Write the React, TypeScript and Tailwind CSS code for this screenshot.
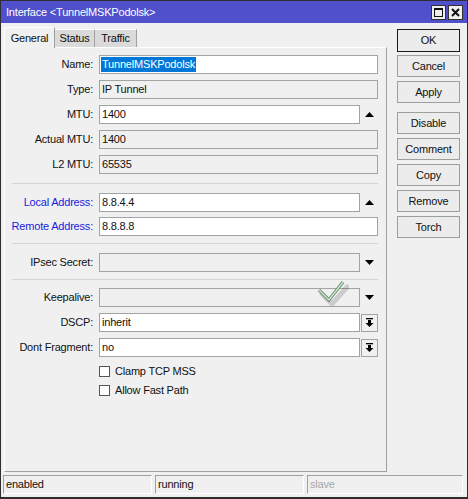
import React from "react";

const font = "font-['Liberation_Sans',Arial,sans-serif] tracking-[-0.2px]";

function Field({
  value,
  editable,
  selected,
  wide = true,
}: {
  value?: string;
  editable?: boolean;
  selected?: boolean;
  wide?: boolean;
}) {
  return (
    <div
      className={`h-[19px] border border-[#a3a3a3] flex items-center px-[1px] text-[11px] text-[#111] ${
        editable ? "bg-white" : "bg-[#f0f0f0]"
      } ${wide ? "w-[279px]" : "w-[261px]"}`}
    >
      {selected ? (
        <span className="bg-[#0078d7] text-white h-[15px] leading-[15px] px-[1px]">{value}</span>
      ) : (
        <span className="pl-[1px]">{value}</span>
      )}
    </div>
  );
}

function Row({
  label,
  blue,
  children,
  className = "",
}: {
  label: string;
  blue?: boolean;
  children: React.ReactNode;
  className?: string;
}) {
  return (
    <div className={`flex items-center h-[19px] ${className}`}>
      <div className={`w-[88px] text-right text-[11px] ${blue ? "text-[#1a1ae0]" : "text-[#111]"}`}>
        {label}:
      </div>
      <div className="ml-[6px] flex items-center">{children}</div>
    </div>
  );
}

function Tri({ up }: { up?: boolean }) {
  return (
    <div className="w-[18px] flex justify-center">
      <svg width="9" height="5" viewBox="0 0 9 5">
        {up ? <path d="M4.5 0 L9 5 L0 5 Z" fill="#000" /> : <path d="M0 0 L9 0 L4.5 5 Z" fill="#000" />}
      </svg>
    </div>
  );
}

function DropBtn() {
  return (
    <div className="ml-[1px] w-[17px] h-[18px] border border-[#a3a3a3] bg-[#f0f0f0] flex items-center justify-center">
      <svg width="9" height="9" viewBox="0 0 9 9">
        <rect x="1" y="0" width="7" height="1.3" fill="#000" />
        <path d="M3 2 H6 V5 H8.5 L4.5 9 L0.5 5 H3 Z" fill="#000" />
      </svg>
    </div>
  );
}

function Sep({ className = "" }: { className?: string }) {
  return <div className={`ml-[7px] w-[366px] h-[1px] bg-[#d5d5d5] ${className}`} />;
}

function Check({ label, className = "" }: { label: string; className?: string }) {
  return (
    <div className={`flex items-center h-[13px] pl-[94px] ${className}`}>
      <div className="w-[11px] h-[11px] border border-[#555] bg-white" />
      <span className="ml-[5px] text-[11px] text-[#111]">{label}</span>
    </div>
  );
}

function Btn({ label, primary, className = "" }: { label: string; primary?: boolean; className?: string }) {
  return (
    <div
      className={`w-[63px] flex items-center justify-center text-[11px] text-[#111] bg-[#ececec] ${
        primary ? "h-[23px] border border-[#1a1a1a]" : "h-[22px] border border-[#9e9e9e]"
      } ${className}`}
    >
      {label}
    </div>
  );
}

export default function App() {
  return (
    <div className={`${font} w-[468px] h-[499px] bg-[#f0f0f0] border border-b-2 border-[#2e2e2e] flex flex-col`}>
      {/* title */}
      <div className="h-[22px] bg-[#5050cc] flex items-center pl-[5px] pr-[4px]">
        <span className="text-white text-[11px]">Interface &lt;TunnelMSKPodolsk&gt;</span>
        <div className="ml-auto flex gap-[2px]">
          <div className="w-[15px] h-[15px] bg-[#efefef] border border-[#333] flex items-center justify-center">
            <div className="w-[9px] h-[9px] border border-[#111] border-t-2" />
          </div>
          <div className="w-[15px] h-[15px] bg-[#efefef] border border-[#333] flex items-center justify-center">
            <svg width="9" height="9" viewBox="0 0 9 9">
              <path d="M1 1 L8 8 M8 1 L1 8" stroke="#111" strokeWidth="2" />
            </svg>
          </div>
        </div>
      </div>

      {/* main */}
      <div className="h-[450px] flex pl-[3px]">
        <div className="flex flex-col pt-[4px]">
          <div className="flex items-end h-[20px]">
            <div className="relative z-10 h-[21px] mb-[-1px] w-[51px] bg-[#f0f0f0] border-t border-l border-r border-t-white border-l-white border-r-[#a0a0a0] flex items-center justify-center text-[11px] text-[#111]">
              General
            </div>
            <div className="h-[18px] w-[40px] bg-[#dadada] border-t border-r border-t-white border-r-[#a0a0a0] flex items-center justify-center text-[11px] text-[#111]">
              Status
            </div>
            <div className="h-[18px] w-[42px] bg-[#dadada] border-t border-r border-t-white border-r-[#a0a0a0] flex items-center justify-center text-[11px] text-[#111]">
              Traffic
            </div>
          </div>
          <div className="relative w-[383px] h-[425px] border border-t-white border-l-white border-r-[#a0a0a0] border-b-[#a0a0a0] pt-[7px]">
            <div className="flex flex-col gap-[6px]">
              <Row label="Name">
                <Field value="TunnelMSKPodolsk" editable selected />
              </Row>
              <Row label="Type">
                <Field value="IP Tunnel" />
              </Row>
              <Row label="MTU">
                <Field value="1400" editable wide={false} />
                <Tri up />
              </Row>
              <Row label="Actual MTU">
                <Field value="1400" />
              </Row>
              <Row label="L2 MTU">
                <Field value="65535" />
              </Row>
            </div>
            <Sep className="mt-[9px]" />
            <div className="flex flex-col gap-[5px] mt-[9px]">
              <Row label="Local Address" blue>
                <Field value="8.8.4.4" editable wide={false} />
                <Tri up />
              </Row>
              <Row label="Remote Address" blue>
                <Field value="8.8.8.8" editable />
              </Row>
            </div>
            <Sep className="mt-[7px]" />
            <Row label="IPsec Secret" className="mt-[9px]">
              <Field wide={false} />
              <Tri />
            </Row>
            <Sep className="mt-[7px]" />
            <div className="flex flex-col gap-[6px] mt-[8px]">
              <Row label="Keepalive">
                <Field wide={false} />
                <Tri />
              </Row>
              <Row label="DSCP">
                <Field value="inherit" editable wide={false} />
                <DropBtn />
              </Row>
              <Row label="Dont Fragment">
                <Field value="no" editable wide={false} />
                <DropBtn />
              </Row>
            </div>
            <Check label="Clamp TCP MSS" className="mt-[8px]" />
            <Check label="Allow Fast Path" className="mt-[6px]" />

            {/* cursor checkmark overlay */}
            <svg className="absolute left-[308px] top-[232px]" width="36" height="26" viewBox="0 0 36 26">
              <path d="M9 14 L19 24 L34 7" stroke="#000" strokeOpacity="0.15" strokeWidth="5" fill="none" strokeLinecap="round" />
              <path d="M6 10 L16 20 L30 2" stroke="#5d7a68" strokeWidth="3" fill="none" />
              <path d="M6 10 L16 20 L30 2" stroke="#d4f4cc" strokeWidth="1.3" fill="none" />
            </svg>
          </div>
        </div>

        <div className="ml-[10px] pt-[6px] flex flex-col">
          <Btn label="OK" primary />
          <Btn label="Cancel" className="mt-[3px]" />
          <Btn label="Apply" className="mt-[4px]" />
          <Btn label="Disable" className="mt-[9px]" />
          <Btn label="Comment" className="mt-[4px]" />
          <Btn label="Copy" className="mt-[4px]" />
          <Btn label="Remove" className="mt-[4px]" />
          <Btn label="Torch" className="mt-[4px]" />
        </div>
      </div>

      {/* status bar */}
      <div className="h-[24px] pt-[2px] pl-[2px] pr-[4px] flex gap-[3px]">
        <div className="w-[149px] h-[19px] border border-t-[#a0a0a0] border-l-[#a0a0a0] border-r-white border-b-white flex items-center pl-[2px] text-[11px] text-[#111]">
          enabled
        </div>
        <div className="w-[149px] h-[19px] border border-t-[#a0a0a0] border-l-[#a0a0a0] border-r-white border-b-white flex items-center pl-[2px] text-[11px] text-[#111]">
          running
        </div>
        <div className="flex-1 h-[19px] border border-t-[#a0a0a0] border-l-[#a0a0a0] border-r-white border-b-white flex items-center pl-[2px] text-[11px] text-[#a8a8a8]">
          slave
        </div>
      </div>
    </div>
  );
}
